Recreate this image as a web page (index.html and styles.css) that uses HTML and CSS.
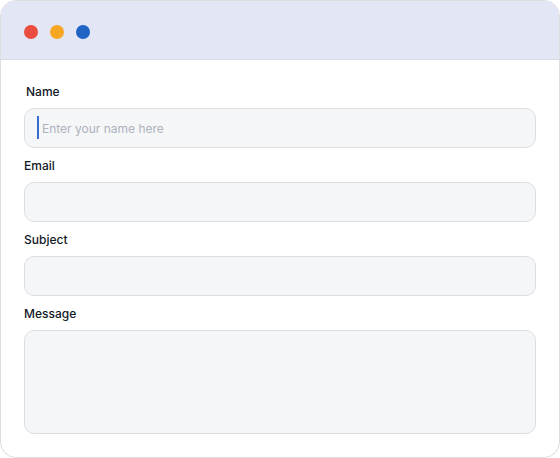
FILE: index.html
```html
<!DOCTYPE html>
<html lang="en">
<head>
    <meta charset="UTF-8">
    <meta name="viewport" content="width=device-width, initial-scale=1.0">
    <title>Contact Form</title>
    <link rel="stylesheet" href="styles.css">
</head>
<body>

    <div class="window">
        <header class="titlebar">
            <span class="dot dot-red"></span>
            <span class="dot dot-yellow"></span>
            <span class="dot dot-blue"></span>
        </header>

        <form class="form">
            <div class="field">
                <label class="label label-first" for="name">Name</label>
                <div class="input-wrap">
                    <span class="caret"></span>
                    <input class="input input-name" type="text" id="name" placeholder="Enter your name here">
                </div>
            </div>
            <div class="field">
                <label class="label" for="email">Email</label>
                <input class="input" type="email" id="email">
            </div>
            <div class="field">
                <label class="label" for="subject">Subject</label>
                <input class="input" type="text" id="subject">
            </div>
            <div class="field">
                <label class="label" for="message">Message</label>
                <textarea class="input textarea" id="message"></textarea>
            </div>
        </form>
    </div>

</body>
</html>
```

FILE: styles.css
```css
* {
    box-sizing: border-box;
}

body {
    margin: 0;
    padding: 0;
    font-family: Inter, "Noto Sans", Arial, sans-serif;
    background-color: #ffffff;
    color: #111827;
}

.window {
    width: 560px;
    height: 458px;
    border: 1px solid #dcdde1;
    border-radius: 16px;
    overflow: hidden;
    background-color: #ffffff;
}

.titlebar {
    height: 59px;
    background-color: #e3e7f5;
    border-bottom: 1px solid #d8dbe4;
    display: flex;
    align-items: center;
    gap: 12px;
    padding: 4px 0 0 23px;
}

.dot {
    width: 14px;
    height: 14px;
    border-radius: 50%;
}

.dot-red {
    background-color: #ea4c3f;
}

.dot-yellow {
    background-color: #f6a623;
}

.dot-blue {
    background-color: #1f63c5;
}

/* form */
.form {
    padding: 22px 23px 0 23px;
    display: flex;
    flex-direction: column;
    gap: 8px;
}

.field {
    display: flex;
    flex-direction: column;
    gap: 6px;
}

.label {
    font-size: 12px;
    font-weight: 500;
    line-height: 20px;
    color: #111827;
}

.label-first {
    padding-left: 2px;
}

.input-wrap {
    position: relative;
}

.input {
    width: 512px;
    height: 40px;
    border: 1px solid #dcdde0;
    border-radius: 10px;
    background-color: #f5f6f8;
    padding: 0 12px;
    font-family: inherit;
    font-size: 12px;
    color: #111827;
    outline: none;
}

.input-name {
    padding-left: 17px;
}

.input::placeholder {
    color: #adb2bd;
}

.caret {
    position: absolute;
    left: 13px;
    top: 8px;
    width: 2px;
    height: 23px;
    background-color: #3a6bd1;
}

.textarea {
    height: 104px;
    resize: none;
    display: block;
}
```
